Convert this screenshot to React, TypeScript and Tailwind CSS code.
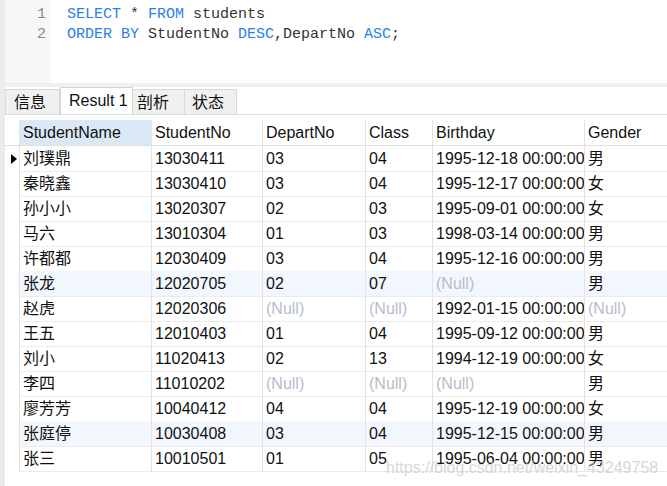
import React from "react";

type Row = {
  name: string;
  no: string;
  depart: string | null;
  cls: string | null;
  birthday: string | null;
  gender: string | null;
  hl?: boolean;
};

const rows: Row[] = [
  { name: "刘璞鼎", no: "13030411", depart: "03", cls: "04", birthday: "1995-12-18 00:00:00", gender: "男" },
  { name: "秦晓鑫", no: "13030410", depart: "03", cls: "04", birthday: "1995-12-17 00:00:00", gender: "女" },
  { name: "孙小小", no: "13020307", depart: "02", cls: "03", birthday: "1995-09-01 00:00:00", gender: "女" },
  { name: "马六", no: "13010304", depart: "01", cls: "03", birthday: "1998-03-14 00:00:00", gender: "男" },
  { name: "许都都", no: "12030409", depart: "03", cls: "04", birthday: "1995-12-16 00:00:00", gender: "男" },
  { name: "张龙", no: "12020705", depart: "02", cls: "07", birthday: null, gender: "男", hl: true },
  { name: "赵虎", no: "12020306", depart: null, cls: null, birthday: "1992-01-15 00:00:00", gender: null },
  { name: "王五", no: "12010403", depart: "01", cls: "04", birthday: "1995-09-12 00:00:00", gender: "男" },
  { name: "刘小", no: "11020413", depart: "02", cls: "13", birthday: "1994-12-19 00:00:00", gender: "女" },
  { name: "李四", no: "11010202", depart: null, cls: null, birthday: null, gender: "男" },
  { name: "廖芳芳", no: "10040412", depart: "04", cls: "04", birthday: "1995-12-19 00:00:00", gender: "女" },
  { name: "张庭停", no: "10030408", depart: "03", cls: "04", birthday: "1995-12-15 00:00:00", gender: "男", hl: true },
  { name: "张三", no: "10010501", depart: "01", cls: "05", birthday: "1995-06-04 00:00:00", gender: "男" },
];

const cols = "grid grid-cols-[14px_132px_111px_103px_67px_152px_1fr]";

function Cell({ value }: { value: string | null }) {
  return (
    <div className="border-l border-[#e3e3e3] pl-[3px] pt-[1px] overflow-hidden whitespace-nowrap flex items-center">
      {value === null ? <span className="text-[#b6bdcc]">(Null)</span> : <span className="text-[#111]">{value}</span>}
    </div>
  );
}

export default function App() {
  const kw = "text-[#2a7ef0]";
  return (
    <div className="relative w-[667px] h-[486px] bg-white flex overflow-hidden font-['Liberation_Sans','Noto_Sans_CJK_SC',sans-serif] text-[16px]">
      {/* left strip */}
      <div className="w-[5px] bg-[#ebebeb] shrink-0" />

      <div className="flex-1 flex flex-col min-w-0">
        {/* editor */}
        <div className="h-[83px] flex font-['Liberation_Mono',monospace] text-[15px] leading-[20px]">
          <div className="w-[45px] bg-[#f7f7f7] pt-[5px] pr-[4px] text-right text-[#8a8a8a]">
            <div>1</div>
            <div>2</div>
          </div>
          <div className="flex-1 pt-[5px] pl-[17px] text-[#333] whitespace-pre">
            <div>
              <span className={kw}>SELECT</span> * <span className={kw}>FROM</span> students
            </div>
            <div>
              <span className={kw}>ORDER BY</span> StudentNo <span className={kw}>DESC</span>,DepartNo{" "}
              <span className={kw}>ASC</span>;
            </div>
          </div>
        </div>

        {/* splitter */}
        <div className="h-[4px] bg-[#f0f0f0]" />

        {/* tabs */}
        <div className="h-[28px] flex items-end border-b border-[#dcdcdc] text-[#111]">
          <div className="w-[55px] h-[25px] bg-[#f0f0f0] border border-b-0 border-[#d9d9d9] pl-[8px] pt-[1px] flex items-center">信息</div>
          <div className="w-[73px] h-[27px] bg-white border border-b-0 border-[#d4d4d4] pl-[8px] flex items-center">Result 1</div>
          <div className="w-[52px] h-[25px] bg-[#f0f0f0] border border-b-0 border-l-0 border-[#d9d9d9] pl-[4px] pt-[1px] flex items-center">剖析</div>
          <div className="w-[52px] h-[25px] bg-[#f0f0f0] border border-b-0 border-l-0 border-[#d9d9d9] pl-[7px] pt-[1px] flex items-center">状态</div>
        </div>

        {/* grid */}
        <div className="pt-[5px]">
          <div className={`${cols} h-[26px] border-b border-[#e0e0e0] text-[#111]`}>
            <div />
            <div className="bg-[#dae8f6] border-l border-[#e3e3e3] pl-[3px] pt-[1px] flex items-center">StudentName</div>
            <div className="border-l border-[#e3e3e3] pl-[3px] pt-[1px] flex items-center">StudentNo</div>
            <div className="border-l border-[#e3e3e3] pl-[3px] pt-[1px] flex items-center">DepartNo</div>
            <div className="border-l border-[#e3e3e3] pl-[3px] pt-[1px] flex items-center">Class</div>
            <div className="border-l border-[#e3e3e3] pl-[3px] pt-[1px] flex items-center">Birthday</div>
            <div className="border-l border-[#e3e3e3] pl-[3px] pt-[1px] flex items-center">Gender</div>
          </div>
          {rows.map((r, i) => (
            <div key={i} className={`${cols} h-[25px]`}>
              <div className="flex items-center pl-[6px]">
                {i === 0 && (
                  <svg width="6" height="10" viewBox="0 0 6 10">
                    <polygon points="0,0 6,5 0,10" fill="#000" />
                  </svg>
                )}
              </div>
              <div className={`col-span-6 grid grid-cols-[132px_111px_103px_67px_152px_1fr] border-b border-[#ebebeb] ${r.hl ? "bg-[#f2f7fd]" : ""}`}>
                <Cell value={r.name} />
                <Cell value={r.no} />
                <Cell value={r.depart} />
                <Cell value={r.cls} />
                <Cell value={r.birthday} />
                <Cell value={r.gender} />
              </div>
            </div>
          ))}
        </div>
      </div>

      {/* watermark */}
      <div className="absolute left-[386px] top-[456px] text-[16px] text-[#c9c9c9] opacity-70 whitespace-nowrap">
        https://blog.csdn.net/weixin_43249758
      </div>
    </div>
  );
}
